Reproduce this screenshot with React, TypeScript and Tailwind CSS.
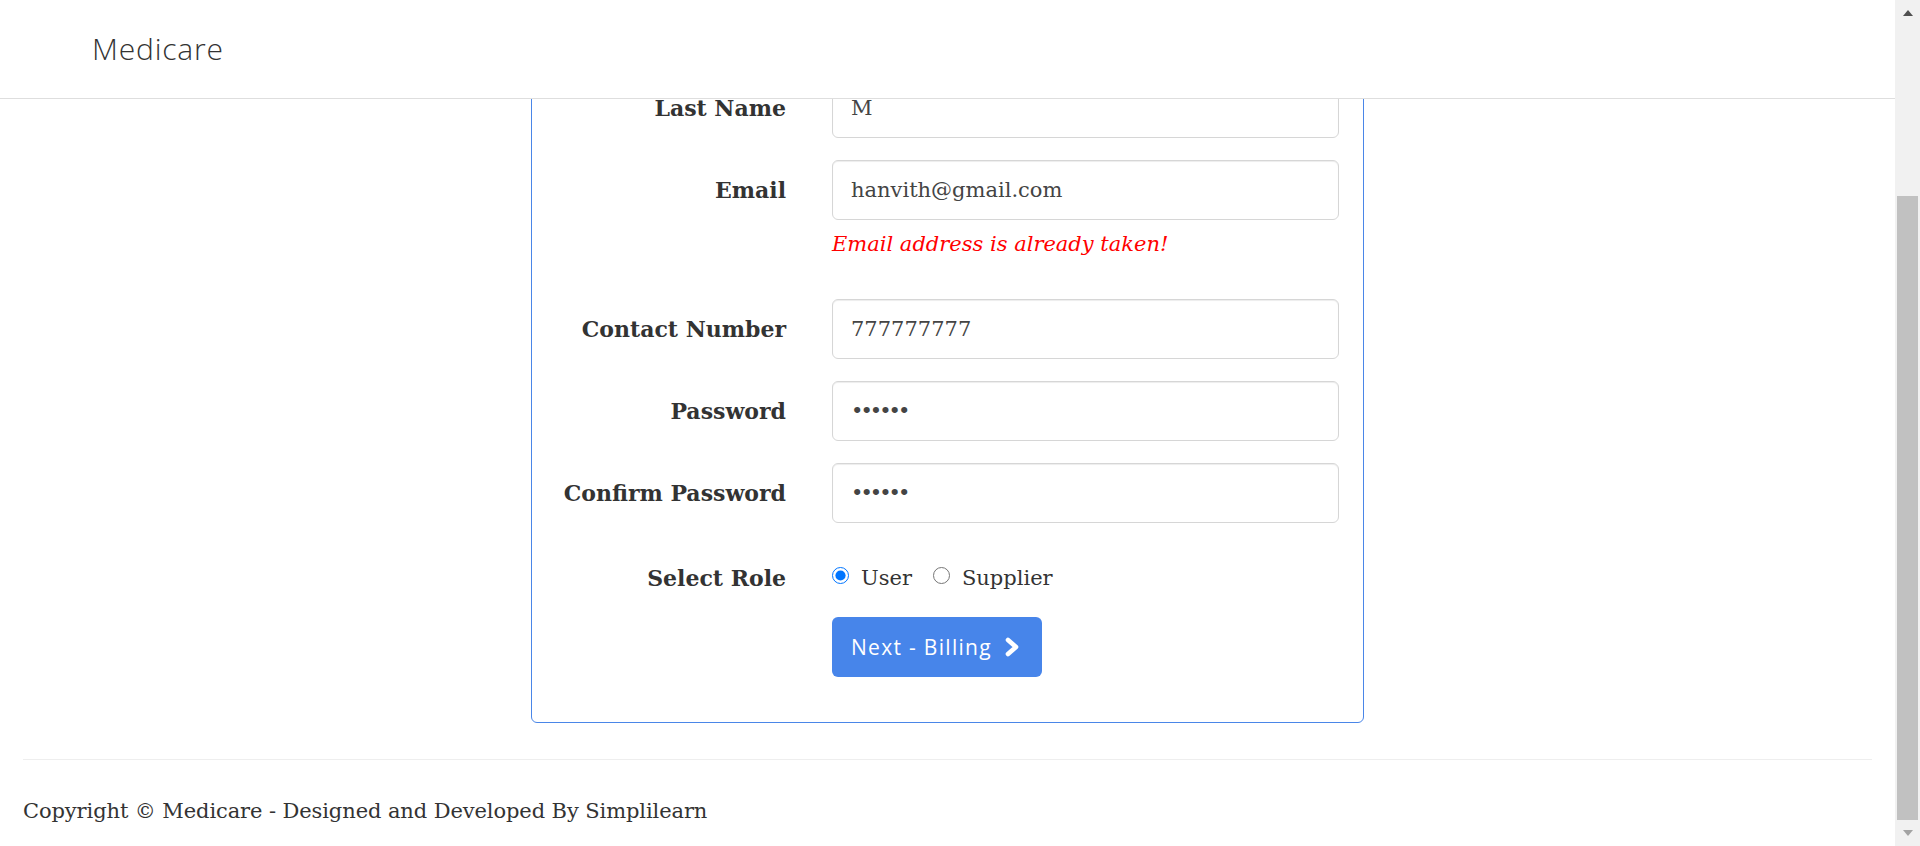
import React from 'react';

const serif = "font-['DejaVu_Serif',Georgia,serif]";

const Chevron = () => (
  <svg width="16" height="20" viewBox="0 0 16 20" className="shrink-0">
    <path
      d="M4 3 L12 10 L4 17"
      fill="none"
      stroke="white"
      strokeWidth="4.6"
      strokeLinecap="round"
      strokeLinejoin="round"
    />
  </svg>
);

type FieldProps = {
  label: string;
  value: string;
  type?: string;
  className?: string;
};

const Field = ({ label, value, type = 'text', className = '' }: FieldProps) => (
  <div className={`grid grid-cols-[230px_507px] gap-x-[46px] ${className}`}>
    <label className="h-[60px] flex items-center justify-end font-bold text-[22px] text-[#333]">
      {label}
    </label>
    <input
      type={type}
      defaultValue={value}
      readOnly
      className={`h-[60px] w-full px-[18px] border border-[#d6d6d6] rounded-[6px] bg-white text-[#444] outline-none shadow-[inset_0_1px_1px_rgba(0,0,0,0.075)] ${serif} text-[21px] ${
        type === 'password' ? 'tracking-[-3px]' : ''
      }`}
    />
  </div>
);

const Scrollbar = () => (
  <div className="w-[25px] h-full bg-[#f1f1f1] flex flex-col shrink-0">
    <div className="h-[25px] flex items-center justify-center">
      <div className="w-0 h-0 border-x-[5.5px] border-x-transparent border-b-[6px] border-b-[#505050]" />
    </div>
    <div className="h-[171px]" />
    <div className="h-[624px] mx-[2px] bg-[#c1c1c1]" />
    <div className="flex-1 flex items-center justify-center">
      <div className="w-0 h-0 border-x-[5.5px] border-x-transparent border-t-[6px] border-t-[#a3a3a3]" />
    </div>
  </div>
);

export default function App() {
  return (
    <div className="flex w-full h-[846px] overflow-hidden bg-white">
      <div className="flex-1 flex flex-col min-w-0">
        {/* navbar */}
        <header className="h-[99px] shrink-0 border-b border-[#dedede] bg-white flex items-center pl-[92px] pb-[2px]">
          <span className="font-['Open_Sans',sans-serif] font-light text-[30px] tracking-[0.8px] text-[#333]">
            Medicare
          </span>
        </header>

        {/* page, scrolled to the bottom */}
        <div className="flex-1 overflow-hidden">
          <div className={`-mt-[43px] ${serif} text-[21px] leading-[30px] text-[#333]`}>
            <div className="w-[833px] mx-auto border border-[#4a86e8] rounded-[6px] pt-[21px] pb-[45px] pl-[24px] pr-[24px]">
              <Field label="Last Name" value="M" className="mb-[22px]" />
              <Field label="Email" value="hanvith@gmail.com" />
              <div className="grid grid-cols-[230px_507px] gap-x-[46px] mt-[9px]">
                <div />
                <p className="italic text-[#ff0000] h-[30px]">Email address is already taken!</p>
              </div>
              <Field label="Contact Number" value="777777777" className="mt-[40px]" />
              <Field label="Password" value="123456" type="password" className="mt-[22px]" />
              <Field label="Confirm Password" value="123456" type="password" className="mt-[22px]" />

              <div className="grid grid-cols-[230px_507px] gap-x-[46px] mt-[40px]">
                <label className="text-right font-bold text-[22px] h-[30px]">Select Role</label>
                <div className="flex items-center h-[30px]">
                  <input
                    type="radio"
                    name="role"
                    defaultChecked
                    className="w-[17px] h-[17px] m-0 mb-[5px] accent-[#0075ff]"
                  />
                  <span className="ml-[12px]">User</span>
                  <input
                    type="radio"
                    name="role"
                    className="w-[17px] h-[17px] m-0 mb-[5px] ml-[21px]"
                  />
                  <span className="ml-[12px]">Supplier</span>
                </div>
              </div>

              <div className="grid grid-cols-[230px_507px] gap-x-[46px] mt-[24px]">
                <div />
                <button className="h-[60px] w-[210px] bg-[#4785ea] rounded-[6px] text-white flex items-center pl-[19px] gap-[12px] font-['Open_Sans',sans-serif] text-[21px] tracking-[1.3px]">
                  Next - Billing
                  <Chevron />
                </button>
              </div>
            </div>

            <hr className="mx-[23px] mt-[36px] border-0 border-t border-[#eee]" />
            <footer className="px-[23px] mt-[36px] tracking-[-0.1px]">
              Copyright © Medicare - Designed and Developed By Simplilearn
            </footer>
          </div>
        </div>
      </div>
      <Scrollbar />
    </div>
  );
}
